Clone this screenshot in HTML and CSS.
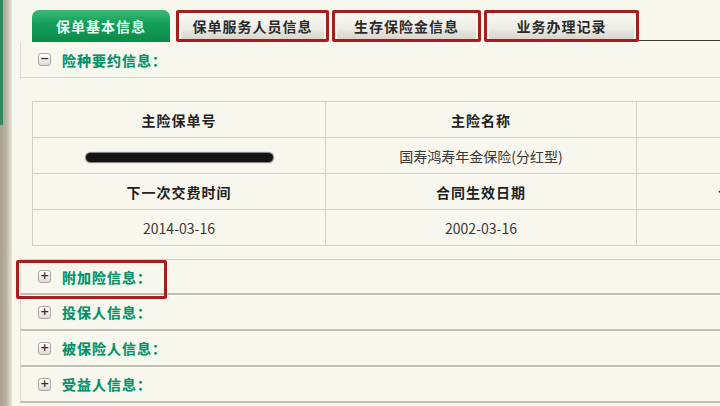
FILE: index.html
```html
<!DOCTYPE html>
<html lang="zh-CN">
<head>
<meta charset="utf-8">
<title>保单基本信息</title>
<link rel="stylesheet" href="styles.css">
</head>
<body>
<div class="page">
  <div class="sidebar"><div class="sidebar-green"></div></div>
  <div class="main">
    <div class="tabs">
      <div class="tab tab-active">保单基本信息</div>
      <div class="tab tab-marked"><span class="tab-btn">保单服务人员信息</span></div>
      <div class="tab tab-marked"><span class="tab-btn">生存保险金信息</span></div>
      <div class="tab tab-marked"><span class="tab-btn">业务办理记录</span></div>
      <div class="tabs-rest"></div>
    </div>

    <div class="section section-head">
      <span class="toggle">−</span>
      <span class="section-title">险种要约信息：</span>
    </div>

    <table class="info">
      <tr class="th-row">
        <td class="c1">主险保单号</td>
        <td class="c2">主险名称</td>
        <td class="c3"></td>
      </tr>
      <tr>
        <td><span class="redact"></span></td>
        <td>国寿鸿寿年金保险(分红型)</td>
        <td></td>
      </tr>
      <tr class="th-row">
        <td>下一次交费时间</td>
        <td>合同生效日期</td>
        <td class="edge"><span>合同</span></td>
      </tr>
      <tr>
        <td>2014-03-16</td>
        <td>2002-03-16</td>
        <td></td>
      </tr>
    </table>

    <div class="sections">
      <div class="section row first marked-row">
        <span class="toggle">+</span>
        <span class="section-title">附加险信息：</span>
      </div>
      <div class="section row">
        <span class="toggle">+</span>
        <span class="section-title">投保人信息：</span>
      </div>
      <div class="section row">
        <span class="toggle">+</span>
        <span class="section-title">被保险人信息：</span>
      </div>
      <div class="section row">
        <span class="toggle">+</span>
        <span class="section-title">受益人信息：</span>
      </div>
    </div>
  </div>
</div>
</body>
</html>
```

FILE: styles.css
```css
html, body {
  margin: 0;
  padding: 0;
  width: 720px;
  height: 406px;
  overflow: hidden;
  background: #f8f7ee;
  font-family: "Noto Sans CJK SC", "Liberation Sans", sans-serif;
}

.page {
  display: flex;
  height: 406px;
}

.sidebar {
  width: 12px;
  flex: none;
  background: linear-gradient(to right, #aaa190 0, #b8af9e 6px, #d2ccbd 9px, #e6e2d6 12px);
}
.sidebar-green {
  width: 3px;
  height: 125px;
  background: #2f8a5c;
}

.main {
  flex: 1;
  min-width: 0;
  padding-top: 10px;
}

/* Tabs */
.tabs {
  display: flex;
  align-items: flex-end;
  height: 32px;
  padding-left: 20px;
}
.tab {
  box-sizing: border-box;
  height: 32px;
  font-size: 14px;
  font-weight: bold;
  letter-spacing: 1px;
  display: flex;
  align-items: center;
  justify-content: center;
}
.tab-active {
  width: 138px;
  border-radius: 7px 7px 0 0;
  background: linear-gradient(to bottom, #3cb878 0, #16a05c 40%, #0b8a48 100%);
  color: #e6fff2;
}
.tab-marked {
  border: 3px solid #a51d1d;
  border-radius: 2px;
  padding: 0 2px;
}
.tab-marked:nth-child(2) { width: 153px; margin-left: 6px; }
.tab-marked:nth-child(3) { width: 149px; margin-left: 3px; }
.tab-marked:nth-child(4) { width: 155px; margin-left: 3px; }
.tab-btn {
  flex: 1;
  height: 26px;
  display: flex;
  align-items: center;
  justify-content: center;
  background: linear-gradient(to bottom, #fbfbf7 0, #ecebe4 60%, #d6d4cb 100%);
  color: #2a2a2a;
  border-radius: 2px;
}
.tabs-rest {
  flex: 1;
  height: 1px;
  margin-bottom: 1px;
  background: #3a3a3a;
}

/* Sections */
.section {
  box-sizing: border-box;
  display: flex;
  align-items: center;
  height: 36px;
  margin-left: 8px;
  padding-left: 17px;
  border-left: 1px solid #dedbd0;
}
.section-head {
  border-bottom: 1px solid #d8d5ca;
}
.toggle {
  box-sizing: border-box;
  width: 13px;
  height: 13px;
  border: 1px solid #a8a69e;
  border-radius: 3px;
  background: linear-gradient(to bottom, #ffffff, #dedcd4);
  color: #333;
  font-size: 11px;
  font-weight: bold;
  line-height: 10px;
  text-align: center;
  font-family: "DejaVu Sans", sans-serif;
  margin-right: 11px;
}
.section-title {
  font-size: 14px;
  font-weight: bold;
  letter-spacing: 1px;
  color: #0a8e6a;
  text-shadow: 0 0 1px rgba(40, 200, 150, 0.5);
}

/* Table */
.info {
  margin: 23px 0 0 20px;
  border-collapse: collapse;
  width: 843px;
  table-layout: fixed;
}
.info td {
  border: 1px solid #d3d1c6;
  height: 35px;
  padding: 0;
  text-align: center;
  font-size: 14px;
  color: #383838;
  white-space: nowrap;
  overflow: hidden;
}
.info .c1 { width: 292px; }
.info .c2 { width: 310px; }
.info .c3 { width: 240px; }
.info .th-row td {
  font-size: 14px;
  font-weight: bold;
  letter-spacing: 1px;
  color: #222;
}
.info td.edge {
  text-align: left;
  padding-left: 81px;
}
.redact {
  display: inline-block;
  width: 187px;
  height: 9px;
  border-radius: 5px;
  background: #141414;
  vertical-align: middle;
  box-shadow: 0 0 1px 1px rgba(0, 0, 0, 0.5);
}

.sections {
  margin-top: 13px;
}
.row {
  border-bottom: 2px solid #c2beb2;
  box-shadow: 0 1px 0 #ffffff;
}
.row.first {
  border-top: 1px solid #d0cdc2;
}
.marked-row {
  position: relative;
}
.marked-row::after {
  content: "";
  position: absolute;
  left: -5px;
  top: 0;
  width: 145px;
  height: 33px;
  border: 3px solid #a51d1d;
  border-radius: 2px;
}
```
